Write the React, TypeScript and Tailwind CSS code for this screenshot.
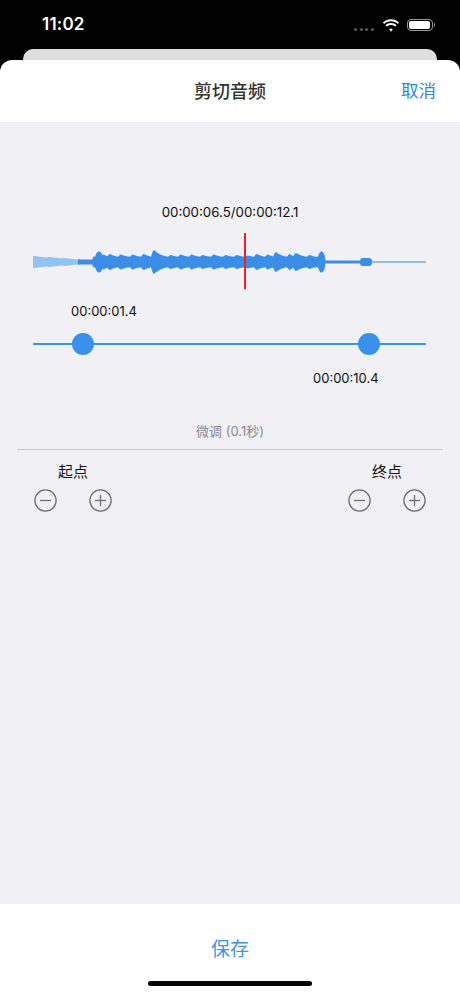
import React from "react";

const MID = 262;

type Bump = [number, number, number];

// start x, peak half-height, decay width
const bumps: Bump[] = [
    [104, 7.5, 7],
    [110, 8, 11],
    [121, 7.5, 12],
    [133, 7.5, 11],
    [144, 8, 11],
    [154, 12, 17],
    [171, 7, 10],
    [181, 7.5, 11],
    [192, 7.5, 11],
    [203, 7, 11],
    [214, 7.5, 12],
    [226, 7, 11],
    [237, 7, 11],
    [248, 6.5, 9],
    [257, 8, 11],
    [268, 7.5, 9],
    [276, 10, 14],
    [290, 8, 7],
    [296, 9, 14],
    [310, 7, 8],
];

function ellipse(x: number, cx: number, rx: number, h: number) {
    const d = (x - cx) / rx;
    return Math.abs(d) <= 1 ? h * Math.sqrt(1 - d * d) : 0;
}

function mainAmp(x: number) {
    let a = 1.4;
    if (x < 93) a = 2.4;
    else if (x <= 318) a = 5.2;
    for (const [p, h, w] of bumps) {
        if (x >= p - 3 && x < p) {
            const r = (x - p + 3) / 3;
            a = Math.max(a, 5.2 + (h - 5.2) * Math.sin((r * Math.PI) / 2));
        } else if (x >= p && x <= p + w) {
            const t = (x - p) / w;
            a = Math.max(a, 5.2 + (h - 5.2) * Math.pow(1 - t, 2.2));
        }
    }
    a = Math.max(a, ellipse(x, 99, 4.5, 10.5), ellipse(x, 321.5, 4, 10.5));
    // small capsule near the end
    if (x >= 360 && x <= 372) {
        const e = Math.min(x - 360, 372 - x);
        a = Math.max(a, e >= 2 ? 4 : 1.4 + 2.6 * Math.sqrt(e / 2));
    }
    return a;
}

function lightAmp(x: number) {
    const t = (x - 33) / 47;
    const saw = ((x - 33) % 15) / 15;
    return 6.2 - 3.2 * t - saw * 0.8;
}

function shape(from: number, to: number, fn: (x: number) => number) {
    const top: string[] = [];
    const bottom: string[] = [];
    for (let x = from; x <= to; x += 0.5) {
        const a = fn(x);
        top.push(`${x},${(MID - a).toFixed(2)}`);
        bottom.unshift(`${x},${(MID + a).toFixed(2)}`);
    }
    return [...top, ...bottom].join(" ");
}

function Waveform() {
    return (
        <svg width="460" height="60" viewBox="0 230 460 60" className="block">
            <polygon points={shape(33, 80, lightAmp)} fill="#92c4f1" />
            <polygon points={shape(78, 372, mainAmp)} fill="#3a8ee8" strokeLinejoin="round" />
            <rect x="372" y={MID - 1} width="54" height="2" fill="#8fbfe9" />
            <rect x="244" y="233" width="2" height="56" fill="#ff1a1a" />
        </svg>
    );
}

function RoundIcon({ plus }: { plus?: boolean }) {
    return (
        <svg width="23" height="23" viewBox="0 0 23 23" fill="none" stroke="#6f6f73" strokeWidth="1.3">
            <circle cx="11.5" cy="11.5" r="10.6" />
            <line x1="6" y1="11.5" x2="17" y2="11.5" />
            {plus && <line x1="11.5" y1="6" x2="11.5" y2="17" />}
        </svg>
    );
}

function Fine({ label }: { label: string }) {
    return (
        <div className="flex w-[78px] flex-col items-center">
            <span className="text-[15px] leading-5 text-[#111]">{label}</span>
            <div className="mt-[7px] flex w-full justify-between">
                <RoundIcon />
                <RoundIcon plus />
            </div>
        </div>
    );
}

function StatusBar() {
    return (
        <div className="flex h-[49px] shrink-0 items-center justify-between pl-[42px] pr-[25px] pt-[1px]">
            <span className="font-['Inter',sans-serif] text-[17px] font-semibold tracking-[0.2px] text-white">11:02</span>
            <div className="flex items-center">
                <div className="mt-[9px] flex gap-[2.5px]">
                    <span className="h-[3px] w-[3px] rounded-full bg-[#5c5c5c]" />
                    <span className="h-[3px] w-[3px] rounded-full bg-[#5c5c5c]" />
                    <span className="h-[3px] w-[3px] rounded-full bg-[#5c5c5c]" />
                    <span className="h-[3px] w-[3px] rounded-full bg-[#5c5c5c]" />
                </div>
                <svg width="18" height="13" viewBox="0 0 18 13" className="ml-[8px]" fill="white">
                    <path d="M9 2.2c2.6 0 5 1 6.8 2.7l1.3-1.3C15 1.5 12.1.3 9 .3S3 1.5.9 3.6l1.3 1.3C4 3.2 6.4 2.2 9 2.2z" />
                    <path d="M9 5.9c1.6 0 3.1.6 4.2 1.6l1.3-1.3C13.1 4.8 11.1 4 9 4s-4.1.8-5.5 2.2l1.3 1.3C5.9 6.5 7.4 5.9 9 5.9z" />
                    <path d="M9 9.5c.7 0 1.3.3 1.8.7L9 12.7 7.2 10.2c.5-.4 1.1-.7 1.8-.7z" />
                </svg>
                <div className="ml-[7px] flex items-center">
                    <div className="flex h-[12.5px] w-[26px] items-center rounded-[4px] border border-[#9a9a9a] p-[1.5px]">
                        <div className="h-full w-full rounded-[2px] bg-white" />
                    </div>
                    <div className="ml-[1px] h-[4px] w-[1.5px] rounded-r-sm bg-[#9a9a9a]" />
                </div>
            </div>
        </div>
    );
}

export default function App() {
    return (
        <div className="flex h-[996px] w-[460px] flex-col overflow-hidden bg-black font-['Inter','Noto_Sans_CJK_SC',sans-serif]">
            <StatusBar />
            <div className="mx-[23px] h-[11px] shrink-0 rounded-t-[10px] bg-[#dedede]" />

            <div className="flex min-h-0 flex-1 flex-col overflow-hidden rounded-t-[12px] bg-white">
                <div className="relative flex h-[62px] shrink-0 items-center justify-center">
                    <h1 className="text-[18px] font-medium text-[#333]">剪切音频</h1>
                    <button className="absolute right-[24px] top-1/2 -translate-y-1/2 text-[17.5px] text-[#2f89e3]">取消</button>
                </div>

                <div className="flex min-h-0 flex-1 flex-col bg-[#f0f0f5]">
                    <p className="mt-[82px] text-center text-[13.3px] leading-4 text-[#111]">00:00:06.5/00:00:12.1</p>
                    <div className="mt-[10px]">
                        <Waveform />
                    </div>

                    <p className="mt-[13px] pl-[71px] text-[13px] leading-4 text-[#111]">00:00:01.4</p>
                    <div className="relative mt-[14px] h-[22px]">
                        <div className="absolute left-[33px] right-[34px] top-[10px] h-[2px] rounded-full bg-[#3a91ec]" />
                        <div className="absolute left-[72px] top-0 h-[22px] w-[22px] rounded-full bg-[#3a91ec]" />
                        <div className="absolute left-[358px] top-0 h-[22px] w-[22px] rounded-full bg-[#3a91ec]" />
                    </div>
                    <p className="mt-[15px] pl-[313px] text-[13px] leading-4 text-[#111]">00:00:10.4</p>

                    <p className="mt-[37px] text-center text-[13px] leading-4 text-[#8a8a8e]">微调 (0.1秒)</p>
                    <div className="mx-[17px] mt-[10px] h-px bg-[#c9c9cd]" />

                    <div className="mt-[12px] flex justify-between px-[34px]">
                        <Fine label="起点" />
                        <Fine label="终点" />
                    </div>
                </div>

                <div className="flex h-[92px] shrink-0 flex-col items-center bg-white">
                    <button className="mt-[34px] text-[19px] leading-6 text-[#3d94e8]">保存</button>
                    <div className="mt-[19px] h-[5px] w-[164px] rounded-full bg-black" />
                </div>
            </div>
        </div>
    );
}
